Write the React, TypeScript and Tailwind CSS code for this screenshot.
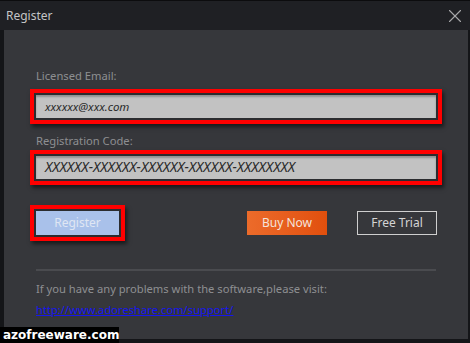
import { X } from "lucide-react";

/* ---------------- FIELD ---------------- */

function HighlightField({ value, textClass }: { value: string; textClass: string }) {
  return (
    <div className="w-[412px] h-[35px] border-4 border-[#ff0000] bg-[#2b2c2f] p-[2px] shadow-[2px_3px_4px_rgba(0,0,0,0.55)]">
      <div className="h-full bg-[#c2c2c2] shadow-[inset_0_2px_2px_rgba(0,0,0,0.25)] flex items-center pl-[9px]">
        <span className={`italic text-[#2a2a2a] ${textClass}`}>{value}</span>
      </div>
    </div>
  );
}

/* ---------------- APP ---------------- */

export default function App() {
  return (
    <div
      className="relative w-[470px] h-[343px] bg-[#141518] overflow-hidden"
      style={{ fontFamily: '"Noto Sans", "Open Sans", sans-serif' }}
    >
      {/* TITLE BAR */}
      <div className="h-[30px] bg-[#1f2024] border-t border-[#0c0c0e] flex items-center justify-between pl-[6px] pr-[4px]">
        <span className="text-[12px] text-[#c4c4c6]">Register</span>
        <X className="size-[22px] text-[#a8a8aa]" strokeWidth={1.2} />
      </div>

      {/* BODY */}
      <div className="ml-[4px] mr-[2px] h-[309px] bg-[#36373b] pl-[26px] pt-[38px]">
        <p className="ml-[6px] text-[11.2px] leading-[16px] text-[#8e8f92]">Licensed Email:</p>
        <div className="mt-[5px]">
          <HighlightField value="xxxxxx@xxx.com" textClass="text-[11.5px]" />
        </div>

        <p className="ml-[6px] mt-[9px] text-[11.2px] leading-[16px] text-[#8e8f92]">Registration Code:</p>
        <div className="mt-[1px]">
          <HighlightField
            value="XXXXXX-XXXXXX-XXXXXX-XXXXXX-XXXXXXXX"
            textClass="text-[13.8px]"
          />
        </div>

        {/* BUTTONS */}
        <div className="mt-[20px] flex items-center">
          <div className="w-[95px] h-[36px] border-4 border-[#ff0000] bg-[#2b2c2f] p-[2px] shadow-[2px_3px_4px_rgba(0,0,0,0.55)]">
            <div className="h-full bg-[#a9c1ea] flex items-center justify-center text-[12px] text-[#dfe6f3]">
              Register
            </div>
          </div>
          <div className="ml-[122px] w-[80px] h-[24px] bg-gradient-to-r from-[#ec6b2a] to-[#e14f0c] flex items-center justify-center text-[12px] text-[#f5e3da]">
            Buy Now
          </div>
          <div className="ml-[30px] w-[80px] h-[24px] border border-[#cfcfcf] flex items-center justify-center text-[12px] text-[#d4d4d4]">
            Free Trial
          </div>
        </div>

        {/* FOOTER */}
        <div className="ml-[6px] mt-[28px] w-[400px] h-[2px] bg-[#4a4b4f]" />
        <p className="ml-[6px] mt-[11px] text-[11.2px] leading-[14px] text-[#8e8f92]">
          If you have any problems with the software,please visit:
        </p>
        <a
          href="#"
          className="ml-[6px] inline-block text-[11.2px] leading-[15px] text-[#1515f0] underline"
        >
          http://www.adoreshare.com/support/
        </a>
      </div>

      {/* WATERMARK */}
      <div className="absolute left-0 bottom-0 w-[119px] h-[16px] bg-black flex items-center pl-[3px]">
        <span className="text-[12px] leading-[16px] font-bold text-white" style={{ fontFamily: '"DejaVu Sans", sans-serif' }}>
          azofreeware.com
        </span>
      </div>
    </div>
  );
}
